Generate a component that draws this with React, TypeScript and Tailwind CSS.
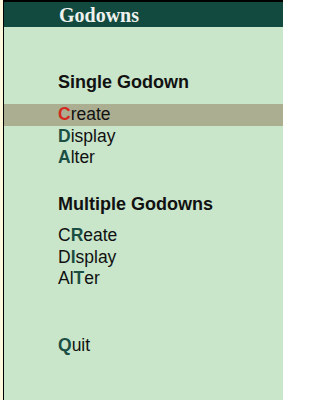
import React from "react";

const hot = "font-bold text-[#1b4f44]";

function Item({ children, active = false }: { children: React.ReactNode; active?: boolean }) {
  return (
    <div className={`flex h-[21.5px] items-center pl-[54px] ${active ? "bg-[#abae91]" : ""}`}>
      <span className="text-[17.5px] leading-none text-[#111]">{children}</span>
    </div>
  );
}

export default function App() {
  return (
    <div
      className="flex h-[400px] w-[283px] bg-[#fdf8dc] pl-[3px]"
      style={{ fontFamily: '"Liberation Sans", Arial, sans-serif' }}
    >
      <div className="flex flex-1 flex-col border-l border-t-2 border-black bg-[#c9e6cb]">
        <div className="flex h-[25px] items-center bg-[#134a3f] pl-[55px]">
          <span
            className="text-[20px] font-bold leading-none text-[#eef2ee]"
            style={{ fontFamily: '"Liberation Serif", "Times New Roman", serif' }}
          >
            Godowns
          </span>
        </div>

        <div className="mt-[44px] flex h-[22px] items-center pl-[54px]">
          <span className="text-[18px] font-bold leading-none text-[#111]">Single Godown</span>
        </div>
        <div className="mt-[11px] flex flex-col">
          <Item active>
            <span className="font-bold text-[#d42a1c]">C</span>reate
          </Item>
          <Item>
            <span className={hot}>D</span>isplay
          </Item>
          <Item>
            <span className={hot}>A</span>lter
          </Item>
        </div>

        <div className="mt-[24px] flex h-[22px] items-center pl-[54px]">
          <span className="text-[18px] font-bold leading-none text-[#111]">Multiple Godowns</span>
        </div>
        <div className="mt-[10.5px] flex flex-col">
          <Item>
            C<span className={hot}>R</span>eate
          </Item>
          <Item>
            D<span className={hot}>I</span>splay
          </Item>
          <Item>
            Al<span className={hot}>T</span>er
          </Item>
        </div>

        <div className="mt-[45.5px] flex flex-col">
          <Item>
            <span className={hot}>Q</span>uit
          </Item>
        </div>
      </div>
    </div>
  );
}
